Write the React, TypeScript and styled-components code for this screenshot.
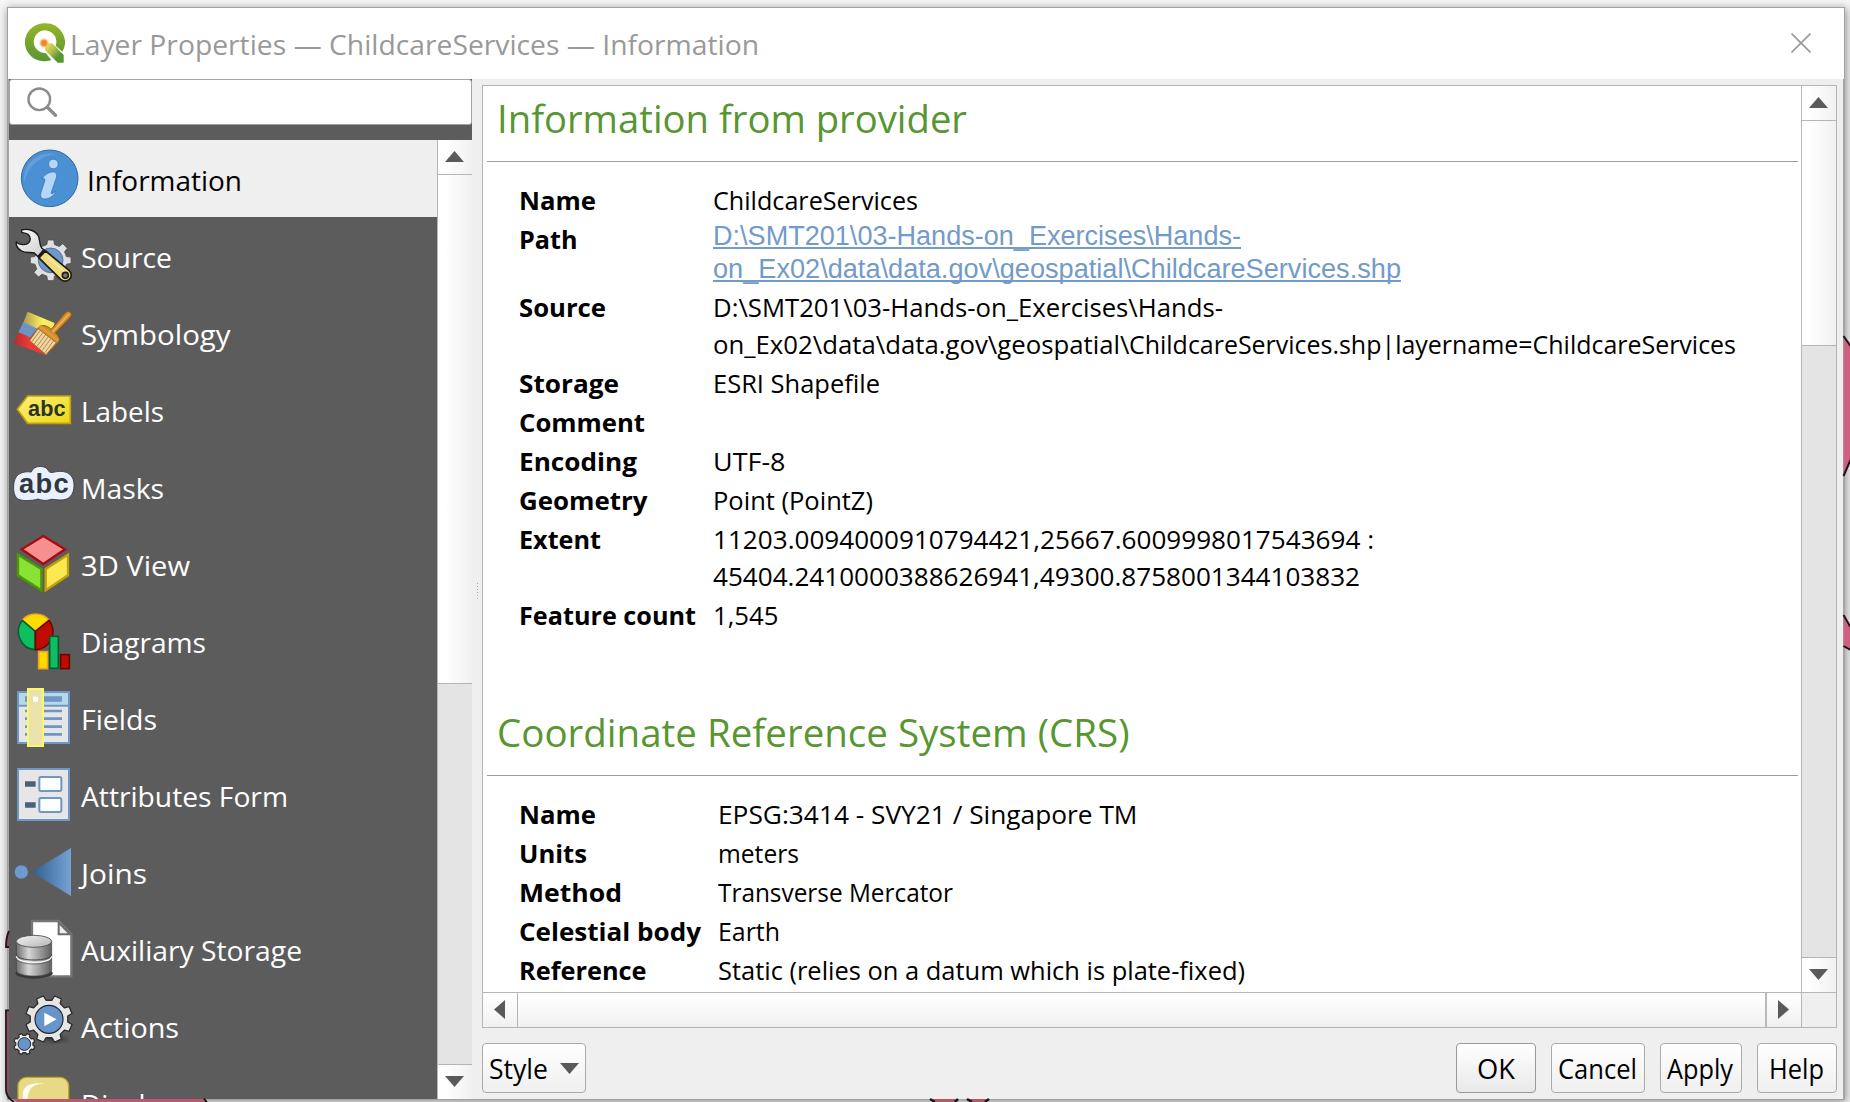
import React, { useLayoutEffect, useRef, useState } from "react";
import styled, { createGlobalStyle, css } from "styled-components";

const UI_FONT = `"Open Sans", "Noto Sans", sans-serif`;
const LINK_FONT = `"Liberation Sans", Arial, sans-serif`;

const GlobalStyle = createGlobalStyle`
  * { box-sizing: border-box; }
  html, body { margin: 0; padding: 0; }
  body { width: 1850px; height: 1102px; overflow: hidden; background: #f7f7f7; font-family: ${UI_FONT}; }
`;

/* ---------- text set to a fixed measure ---------- */

const Measure = styled.span<{ $w: number }>`
  display: block;
  flex: none;
  width: ${(p) => p.$w}px;
  white-space: nowrap;
`;

const Glyphs = styled.span`
  display: inline-block;
  vertical-align: top;
  transform-origin: 0 0;
`;

function FitText({ w, children }: { w: number; children: React.ReactNode }) {
  const ref = useRef<HTMLSpanElement>(null);
  const [scale, setScale] = useState(1);
  useLayoutEffect(() => {
    if (ref.current && ref.current.offsetWidth) {
      setScale(w / ref.current.getBoundingClientRect().width);
    }
  }, []);
  return (
    <Measure $w={w}>
      <Glyphs ref={ref} style={{ transform: `scaleX(${scale})` }}>
        {children}
      </Glyphs>
    </Measure>
  );
}

/* ---------- window frame ---------- */

const Desktop = styled.div`
  position: relative;
  width: 1850px;
  height: 1102px;
  padding: 7px 5px 2px 7px;
  overflow: hidden;
  background: #f7f7f7;
`;

const Dialog = styled.div`
  display: flex;
  flex-direction: column;
  width: 1838px;
  height: 1093px;
  border: 1px solid #a2a2a2;
  background: #efefef;
  box-shadow: 1px 2px 9px 1px rgba(0, 0, 0, 0.38);
`;

const TitleBar = styled.header`
  display: flex;
  align-items: center;
  flex: none;
  height: 71px;
  padding: 0 33px 2px 15px;
  background: #fff;
`;

const Title = styled.h1`
  display: flex;
  margin: 0 auto 0 5px;
  padding-top: 2px;
  font-size: 28px;
  font-weight: 400;
  line-height: 40px;
  color: #999;
`;

const Body = styled.div`
  display: flex;
  flex: 1;
  min-height: 0;
  border-left: 1px solid #a6a6a6;
  border-right: 1px solid #a6a6a6;
`;

/* ---------- sidebar ---------- */

const Sidebar = styled.aside`
  display: flex;
  flex-direction: column;
  flex: none;
  width: 463px;
  background: #5c5c5c;
`;

const SearchBox = styled.div`
  display: flex;
  align-items: center;
  flex: none;
  height: 46px;
  margin-bottom: 15px;
  padding-left: 16px;
  border: 1px solid #a3a3a3;
  border-radius: 3px;
  background: #fff;
`;

const ListArea = styled.div`
  display: flex;
  flex: 1;
  min-height: 0;
`;

const List = styled.nav`
  flex: 1;
  overflow: hidden;
  background: #5c5c5c;
`;

const Item = styled.div<{ $active?: boolean }>`
  display: flex;
  height: 77px;
  color: #fff;
  font-size: 28px;
  line-height: 80px;
  ${(p) =>
    p.$active &&
    css`
      background: #efefef;
      color: #000;
    `}
`;

const IconSlot = styled.svg<{ $wide?: boolean }>`
  flex: none;
  width: 70px;
  height: 77px;
  margin-right: ${(p) => (p.$wide ? 8 : 2)}px;
`;

/* ---------- scroll bars ---------- */

const VBar = styled.div`
  display: flex;
  flex-direction: column;
  flex: none;
  width: 35px;
  border-left: 1px solid #b4b6b6;
  background: #e4e4e4;
`;

const VButton = styled.div<{ $end?: boolean }>`
  display: flex;
  align-items: center;
  justify-content: center;
  flex: none;
  height: 35px;
  padding: 0 2px 1px 0;
  border-${(p) => (p.$end ? "top" : "bottom")}: 1px solid #b4b6b6;
  background: linear-gradient(90deg, #fff 20%, #f1f1f1);
`;

const VThumb = styled.div<{ $h: number }>`
  flex: none;
  height: ${(p) => p.$h}px;
  margin-bottom: auto;
  border-bottom: 1px solid #b4b6b6;
  background: linear-gradient(90deg, #fff 20%, #f1f1f1);
`;

const HRow = styled.div`
  display: flex;
  flex: none;
  height: 35px;
  border-top: 1px solid #b4b6b6;
  background: #efefef;
`;

const HPart = styled.div<{ $w?: number; $line?: "left" | "right" }>`
  display: flex;
  align-items: center;
  justify-content: center;
  flex: ${(p) => (p.$w ? "none" : 1)};
  width: ${(p) => (p.$w ? `${p.$w}px` : "auto")};
  padding: 0 2px 1px 0;
  background: linear-gradient(180deg, #fff 10%, #f0f0f0);
  border-left: ${(p) => (p.$line === "left" ? "2px solid #b9bbbb" : "0")};
  border-right: ${(p) => (p.$line === "right" ? "1px solid #b4b6b6" : "0")};
`;

const Corner = styled.div`
  flex: none;
  width: 35px;
  border-left: 1px solid #b4b6b6;
`;

/* ---------- information pane ---------- */

const Splitter = styled.div`
  display: flex;
  align-items: center;
  justify-content: center;
  flex: none;
  width: 10px;
  padding-top: 6px;
`;

const Main = styled.main`
  display: flex;
  flex-direction: column;
  flex: 1;
  min-width: 0;
  padding: 6px 6px 6px 0;
`;

const Frame = styled.section`
  display: flex;
  flex-direction: column;
  flex: none;
  height: 943px;
  border: 1px solid #b4b6b6;
  background: #fff;
`;

const FrameTop = styled.div`
  display: flex;
  flex: 1;
  min-height: 0;
`;

const Page = styled.div`
  flex: 1;
  min-width: 0;
  overflow: hidden;
  padding: 0 3px 0 4px;
  background: #fff;
`;

const Heading = styled.h2`
  margin: 0;
  padding: 5px 0 17px 10px;
  border-bottom: 1px solid #9c9c9c;
  font-size: 39px;
  font-weight: 400;
  line-height: 53px;
  color: #589632;
`;

const Table = styled.dl`
  margin: 19px 0 65px;
  padding-left: 32px;
`;

const Row = styled.div<{ $h?: number }>`
  display: flex;
  height: ${(p) => p.$h ?? 39}px;
`;

const Label = styled.dt<{ $col: number }>`
  flex: none;
  width: ${(p) => p.$col}px;
  font-size: 25.5px;
  font-weight: 700;
  line-height: 39px;
  color: #000;
`;

const Value = styled.dd`
  margin: 0;
  padding-top: 1px;
  font-size: 25.5px;
  line-height: 37px;
  color: #000;
`;

const LinkValue = styled.dd`
  margin: 0;
  font-family: ${LINK_FONT};
  font-size: 27px;
  line-height: 33px;
  color: #729bc9;

  ${Glyphs} {
    text-decoration: underline;
    text-decoration-thickness: 2px;
    text-underline-offset: 2px;
    text-decoration-skip-ink: none;
  }
`;

const TextLine = styled.div`
  display: flex;
`;

/* ---------- footer ---------- */

const Footer = styled.footer`
  display: flex;
  gap: 15px;
  margin-top: 15px;
`;

const Button = styled.button<{ $w: number; $strong?: boolean; $left?: boolean }>`
  display: flex;
  align-items: center;
  justify-content: ${(p) => (p.$left ? "space-between" : "center")};
  width: ${(p) => p.$w}px;
  height: 50px;
  padding: ${(p) => (p.$left ? "2px 6px 0 6px" : "2px 2px 0 0")};
  margin-right: ${(p) => (p.$left ? "auto" : "0")};
  border: 1px solid ${(p) => (p.$strong ? "#999" : "#ababab")};
  border-radius: 4px;
  background: linear-gradient(180deg, #fff, ${(p) => (p.$strong ? "#e9e9e9" : "#efefef")});
  font-family: ${UI_FONT};
  font-size: 26.5px;
  line-height: 48px;
  color: #000;

  svg {
    margin-bottom: 2px;
  }
`;

const Backdrop = styled.svg`
  position: absolute;
  inset: 0;
  pointer-events: none;
`;

/* ---------- small drawings ---------- */

const Arrow = ({ dir }: { dir: "up" | "down" | "left" | "right" }) => {
  const shapes = {
    up: "0,11 9.5,0 19,11",
    down: "0,0 19,0 9.5,11",
    left: "11,0 11,19 0,9.5",
    right: "0,0 11,9.5 0,19",
  };
  const flat = dir === "up" || dir === "down";
  return (
    <svg width={flat ? 19 : 11} height={flat ? 11 : 19}>
      <polygon points={shapes[dir]} fill="#5a5a5a" />
    </svg>
  );
};

const Logo = () => (
  <svg width="42" height="42" viewBox="72 66 126 126">
    <defs>
      <linearGradient id="qg" x1="0" y1="0" x2="0" y2="1">
        <stop offset="0" stopColor="#94b527" />
        <stop offset="1" stopColor="#589632" />
      </linearGradient>
      <linearGradient id="qt" x1="0" y1="0" x2="1" y2="1">
        <stop offset="0" stopColor="#f6e64c" />
        <stop offset=".4" stopColor="#a9c04a" />
        <stop offset=".7" stopColor="#589632" />
      </linearGradient>
      <radialGradient id="qo">
        <stop offset="0" stopColor="#ee7913" />
        <stop offset=".5" stopColor="#f0953f" />
        <stop offset="1" stopColor="#fbe0b8" stopOpacity="0" />
      </radialGradient>
    </defs>
    <path
      d="M135 70a58 57 0 1 0 22 110l-17-21a34 34 0 1 1 30-22l20 18a58 57 0 0 0-55-85z"
      fill="url(#qg)"
    />
    <path d="M138 130h22l34 35v23h-18l-38-38z" fill="url(#qt)" />
    <circle cx="135" cy="129" r="17" fill="url(#qo)" />
  </svg>
);

const CloseIcon = () => (
  <svg width="20" height="20" viewBox="0 0 20 20">
    <path d="M.5.5l19 19M19.5.5l-19 19" stroke="#999" strokeWidth="1.6" fill="none" />
  </svg>
);

const SearchIcon = () => (
  <svg width="32" height="32" viewBox="0 0 32 32">
    <circle cx="13.3" cy="13.3" r="10.8" fill="none" stroke="#8c8c8c" strokeWidth="2.4" />
    <path d="M21.3 21.3l8.2 8" stroke="#8c8c8c" strokeWidth="3.4" strokeLinecap="round" />
  </svg>
);

function gearPath(cx: number, cy: number, ro: number, ri: number, teeth: number, turn = 0) {
  const step = (Math.PI * 2) / teeth;
  const pts: string[] = [];
  for (let i = 0; i < teeth; i++) {
    const a = i * step + turn;
    const corners: [number, number][] = [
      [ri, -0.3],
      [ro, -0.2],
      [ro, 0.2],
      [ri, 0.3],
    ];
    corners.forEach(([r, k]) =>
      pts.push(`${(cx + r * Math.cos(a + k * step)).toFixed(1)} ${(cy + r * Math.sin(a + k * step)).toFixed(1)}`)
    );
  }
  return `M${pts.join("L")}Z`;
}

const InformationIcon = () => (
  <IconSlot $wide viewBox="27 420 210 231">
    <circle cx="149" cy="535" r="85" fill="#4a90d3" stroke="#2f69a8" strokeWidth="3" />
    <path d="M72 548c-4-60 44-96 96-86-50 6-84 38-96 86z" fill="#6ba6de" opacity=".75" />
    <g fill="#b4d7f8" stroke="#2f6cab" strokeWidth="2">
      <circle cx="160" cy="492" r="14.5" />
      <path d="M126 536c8-12 22-22 36-20 9 2 9 11 6 20l-14 41c-2 7 4 5 14-4-4 12-18 23-33 24-13 0-15-9-12-20l11-34c2-7-1-9-8-7z" />
    </g>
  </IconSlot>
);

const SourceIcon = () => (
  <IconSlot viewBox="27 651 210 231">
    <defs>
      <linearGradient id="wr" x1="0" y1="0" x2="1" y2="1">
        <stop offset="0" stopColor="#fff" />
        <stop offset="1" stopColor="#c9c9c9" />
      </linearGradient>
    </defs>
    <path d={gearPath(152, 781, 62, 49, 8)} fill="#dedfe0" stroke="#555" strokeWidth="3" strokeLinejoin="round" />
    <circle cx="152" cy="781" r="37" fill="#6d98cb" stroke="#48648a" strokeWidth="2.5" />
    <path
      d="M65 690c18-5 42 1 50 18 6 12 2 27 10 36l15 12-22 18-15-15c-12-4-26 2-38-6-12-7-18-16-16-27 10 10 26 10 35 4 9-7 9-19 0-27-6-5-14-4-19-6z"
      fill="url(#wr)"
      stroke="#1b1b1b"
      strokeWidth="4"
      strokeLinejoin="round"
    />
    <path
      d="M137 753l70 58c9 8 9 20 1 27-8 7-18 7-26 0l-66-65z"
      fill="#f0dc7d"
      stroke="#1b1b1b"
      strokeWidth="5"
      strokeLinejoin="round"
    />
    <path d="M134 750l-19 22" stroke="#1b1b1b" strokeWidth="10" />
    <path d="M142 770l50 44" stroke="#f8eca6" strokeWidth="4" />
    <circle cx="196" cy="826" r="9" fill="#777" stroke="#1b1b1b" strokeWidth="5" />
  </IconSlot>
);

const SymbologyIcon = () => (
  <IconSlot viewBox="27 12 210 231">
    <defs>
      <linearGradient id="fy" x1="0" x2="1">
        <stop offset="0" stopColor="#a89a4e" />
        <stop offset=".6" stopColor="#fbec63" />
      </linearGradient>
      <linearGradient id="fr" x1="0" x2="1">
        <stop offset="0" stopColor="#b52b2b" />
        <stop offset=".5" stopColor="#ef3a36" />
      </linearGradient>
    </defs>
    <path d="M83 65l81 34-12 40-83-39z" fill="url(#fy)" />
    <path d="M70 97l80 36-12 32-84-36z" fill="#6c93c4" />
    <path d="M55 126l84 38-2 31-96-35z" fill="url(#fr)" />
    <path
      d="M118 110c12-8 28 0 36 8l38-45c6-9 14-11 20-6 5 5 3 11-4 18l-42 44c10 7 14 16 10 26l-38 41-50-48z"
      fill="#d08a2a"
      stroke="#8d5a17"
      strokeWidth="3"
      strokeLinejoin="round"
    />
    <path d="M159 124l47-51" stroke="#f0b35c" strokeWidth="5" strokeLinecap="round" />
    <path d="M114 116l55 42-31 36-49-42z" fill="#f1d6a0" stroke="#8d5a17" strokeWidth="2" />
    <path
      d="M120 122l-25 34M128 129l-26 34M136 135l-26 35M144 141l-26 35M152 147l-26 35M160 153l-26 36"
      stroke="#a27a45"
      strokeWidth="2.5"
    />
    <path d="M118 108l57 44" stroke="#dd9a36" strokeWidth="9" />
  </IconSlot>
);

const LabelsIcon = () => (
  <IconSlot viewBox="27 243 210 231">
    <defs>
      <linearGradient id="lb" x1="0" y1="0" x2="1" y2="1">
        <stop offset="0" stopColor="#fbf17a" />
        <stop offset="1" stopColor="#eed716" />
      </linearGradient>
    </defs>
    <path d="M52 358l31-40h128v82H83z" fill="url(#lb)" stroke="#c2a00c" strokeWidth="5" />
    <text x="84" y="378" fontFamily={LINK_FONT} fontWeight="700" fontSize="65" textLength="113" fill="#2c3424">
      abc
    </text>
  </IconSlot>
);

const MasksIcon = () => (
  <IconSlot viewBox="27 474 210 231">
    <path
      d="M94 546c6-22 46-22 52-2 8 8 18 0 34 0 30 0 42 18 42 42 0 28-14 45-42 44-14 0-22-4-30-1-14 5-26 1-36-2-20 6-46 6-58 1-12-6-16-22-15-40 1-32 20-46 53-42z"
      fill="#eaf0fc"
      stroke="#30373d"
      strokeWidth="2.5"
    />
    <text x="57" y="608" fontFamily={LINK_FONT} fontWeight="700" fontSize="82" textLength="149" fill="#2f3840">
      abc
    </text>
  </IconSlot>
);

const View3DIcon = () => (
  <IconSlot viewBox="27 -75 210 231">
    <path d="M130-42l65 40-65 44-65-44z" fill="#f78f8f" stroke="#a90a0f" strokeWidth="7" />
    <path d="M54 14l70 43v64L54 76z" fill="#8ae234" stroke="#4b9a06" strokeWidth="7" />
    <path d="M204 14l-67 43v64l67-45z" fill="#fce94f" stroke="#c4a008" strokeWidth="7" />
  </IconSlot>
);

const DiagramsIcon = () => (
  <IconSlot viewBox="27 156 210 231">
    <path d="M106 244L67 210a52 50 0 0 1 80 0z" fill="#ffdc00" stroke="#f0a31c" strokeWidth="5" />
    <path d="M106 244v55a53 54 0 0 1-39-88z" fill="#0dbf5e" stroke="#0b5c30" strokeWidth="5" />
    <path d="M106 244v55a53 54 0 0 0 41-88z" fill="#c00c00" stroke="#660800" strokeWidth="5" />
    <rect x="116" y="305" width="27" height="51" fill="#ffdc00" stroke="#f0a31c" strokeWidth="5" />
    <rect x="149" y="259" width="26" height="96" fill="#0dbf5e" stroke="#0b5c30" strokeWidth="5" />
    <rect x="182" y="314" width="26" height="42" fill="#c00c00" stroke="#660800" strokeWidth="5" />
  </IconSlot>
);

const FieldsIcon = () => (
  <IconSlot viewBox="27 387 210 231">
    <rect x="54" y="426" width="153" height="153" fill="#e6e6e6" stroke="#7096c4" strokeWidth="6" />
    <rect x="57" y="429" width="147" height="37" fill="#b5d8ec" />
    <path d="M54 467h153" stroke="#7096c4" strokeWidth="6" />
    <path d="M75 447h111" stroke="#7096c4" strokeWidth="17" />
    <path d="M75 483h111M75 506h111M75 530h111M75 553h111" stroke="#7096c4" strokeWidth="8" />
    <rect x="84" y="417" width="45" height="171" fill="#e9e2ab" stroke="#fdf868" strokeWidth="6" />
    <rect x="99" y="440" width="15" height="15" fill="#fff" />
  </IconSlot>
);

const FormIcon = () => (
  <IconSlot viewBox="27 618 210 231">
    <rect x="54" y="657" width="153" height="153" fill="#e6e6e6" stroke="#7096c4" strokeWidth="6" />
    <path d="M75 702h32M75 765h32" stroke="#4c6078" strokeWidth="16" />
    <rect x="118" y="681" width="66" height="42" rx="5" fill="#fcffff" stroke="#7096c4" strokeWidth="6" />
    <rect x="118" y="744" width="66" height="42" rx="5" fill="#fcffff" stroke="#7096c4" strokeWidth="6" />
  </IconSlot>
);

const JoinsIcon = () => (
  <IconSlot viewBox="27 39 210 231">
    <defs>
      <linearGradient id="jn" x1="0" x2="1">
        <stop offset="0" stopColor="#2f5c90" />
        <stop offset="1" stopColor="#76a3d4" />
      </linearGradient>
    </defs>
    <circle cx="64" cy="156" r="20" fill="#6c9bd0" />
    <path d="M95 156l118-72v144z" fill="url(#jn)" />
  </IconSlot>
);

const StorageIcon = () => (
  <IconSlot viewBox="27 270 210 231">
    <defs>
      <linearGradient id="cy" x1="0" x2="1">
        <stop offset="0" stopColor="#6e6e6e" />
        <stop offset=".35" stopColor="#d6d6d6" />
        <stop offset="1" stopColor="#5f5f5f" />
      </linearGradient>
      <linearGradient id="ct" x1="0" x2="1" y2="1">
        <stop offset="0" stopColor="#f4f4f4" />
        <stop offset="1" stopColor="#b4b4b4" />
      </linearGradient>
    </defs>
    <path d="M96 303h80l38 40v126H96z" fill="#fff" stroke="#767676" strokeWidth="7" />
    <path d="M176 308v35h34z" fill="#efefef" stroke="#6b6b6b" strokeWidth="6" />
    <ellipse cx="102" cy="460" rx="56" ry="16" fill="#373b3b" />
    <path d="M49 364v86c0 24 106 24 106 0v-86z" fill="url(#cy)" stroke="#444" strokeWidth="2" />
    <path d="M49 402c0 24 106 24 106 0" fill="none" stroke="#444" strokeWidth="3" />
    <path d="M49 409c0 24 106 24 106 0" fill="none" stroke="#f5f5f5" strokeWidth="4" />
    <path d="M49 414c0 24 106 24 106 0" fill="none" stroke="#555" strokeWidth="2" />
    <ellipse cx="102" cy="364" rx="53" ry="18" fill="url(#ct)" stroke="#4a4a4a" strokeWidth="2.5" />
  </IconSlot>
);

const ActionsIcon = () => (
  <IconSlot viewBox="27 501 210 231">
    <defs>
      <radialGradient id="as">
        <stop offset="0" stopColor="#222" stopOpacity=".6" />
        <stop offset="1" stopColor="#222" stopOpacity="0" />
      </radialGradient>
    </defs>
    <ellipse cx="165" cy="657" rx="50" ry="18" fill="url(#as)" />
    <path
      d={gearPath(147, 597, 71, 57, 8, Math.PI / 8)}
      fill="#e6e6e6"
      stroke="#2b2b2b"
      strokeWidth="4"
      strokeLinejoin="round"
    />
    <circle cx="147" cy="598" r="42" fill="#6694cb" stroke="#20262e" strokeWidth="3.5" />
    <path d="M133 578l37 20-37 21z" fill="#fff" />
    <path
      d={gearPath(73, 672, 32, 26, 8, Math.PI / 8)}
      fill="#f0f0f0"
      stroke="#2b2b2b"
      strokeWidth="3.5"
      strokeLinejoin="round"
    />
    <circle cx="73" cy="672" r="19" fill="#6694cb" stroke="#20262e" strokeWidth="3" />
  </IconSlot>
);

const DisplayIcon = () => (
  <IconSlot viewBox="27 732 210 231">
    <rect x="54" y="772" width="152" height="130" rx="26" fill="#e6da84" stroke="#bfa526" strokeWidth="4" />
    <path d="M69 840c-6-38 10-54 66-50-34 4-48 8-53 50z" fill="#fffef2" />
  </IconSlot>
);

/* ---------- content ---------- */

const items: { name: string; w: number; icon: React.FC }[] = [
  { name: "Information", w: 155, icon: InformationIcon },
  { name: "Source", w: 91, icon: SourceIcon },
  { name: "Symbology", w: 149.5, icon: SymbologyIcon },
  { name: "Labels", w: 83, icon: LabelsIcon },
  { name: "Masks", w: 83, icon: MasksIcon },
  { name: "3D View", w: 109, icon: View3DIcon },
  { name: "Diagrams", w: 125, icon: DiagramsIcon },
  { name: "Fields", w: 76, icon: FieldsIcon },
  { name: "Attributes Form", w: 207, icon: FormIcon },
  { name: "Joins", w: 66, icon: JoinsIcon },
  { name: "Auxiliary Storage", w: 221, icon: StorageIcon },
  { name: "Actions", w: 98, icon: ActionsIcon },
  { name: "Display", w: 94, icon: DisplayIcon },
];

type Part = { text: string; w: number };
type Entry = { label: string; lw: number; h?: number; link?: boolean; lines: Part[][] };

const provider: Entry[] = [
  { label: "Name", lw: 77, lines: [[{ text: "ChildcareServices", w: 205 }]] },
  {
    label: "Path",
    lw: 58.5,
    h: 68,
    link: true,
    lines: [
      [{ text: "D:\\SMT201\\03-Hands-on_Exercises\\Hands-", w: 528 }],
      [{ text: "on_Ex02\\data\\data.gov\\geospatial\\ChildcareServices.shp", w: 688 }],
    ],
  },
  {
    label: "Source",
    lw: 87,
    h: 76,
    lines: [
      [{ text: "D:\\SMT201\\03-Hands-on_Exercises\\Hands-", w: 510 }],
      [
        { text: "on_Ex02\\data\\data.gov\\geospatial\\", w: 416.5 },
        { text: "ChildcareServices.shp|layername=ChildcareServices", w: 607 },
      ],
    ],
  },
  { label: "Storage", lw: 100, lines: [[{ text: "ESRI Shapefile", w: 167 }]] },
  { label: "Comment", lw: 126, lines: [] },
  { label: "Encoding", lw: 118, lines: [[{ text: "UTF-8", w: 72.500 }]] },
  { label: "Geometry", lw: 128.5, lines: [[{ text: "Point (PointZ)", w: 160 }]] },
  {
    label: "Extent",
    lw: 82,
    h: 76,
    lines: [
      [{ text: "11203.0094000910794421,25667.6009998017543694 :", w: 661 }],
      [{ text: "45404.2410000388626941,49300.8758001344103832", w: 647 }],
    ],
  },
  { label: "Feature count", lw: 177, lines: [[{ text: "1,545", w: 65.5 }]] },
];

const crs: Entry[] = [
  { label: "Name", lw: 77, lines: [[{ text: "EPSG:3414 - SVY21 / Singapore TM", w: 419.5 }]] },
  { label: "Units", lw: 68, lines: [[{ text: "meters", w: 81 }]] },
  { label: "Method", lw: 103, lines: [[{ text: "Transverse Mercator", w: 235 }]] },
  { label: "Celestial body", lw: 182, lines: [[{ text: "Earth", w: 62 }]] },
  { label: "Reference", lw: 127.5, lines: [[{ text: "Static (relies on a datum which is plate-fixed)", w: 527 }]] },
];

function Section({ title, w, col, entries }: { title: string; w: number; col: number; entries: Entry[] }) {
  return (
    <>
      <Heading>
        <FitText w={w}>{title}</FitText>
      </Heading>
      <Table>
        {entries.map((e) => {
          const Cell = e.link ? LinkValue : Value;
          return (
            <Row key={e.label} $h={e.h}>
              <Label $col={col}>
                <FitText w={e.lw}>{e.label}</FitText>
              </Label>
              <Cell>
                {e.lines.map((line, i) => (
                  <TextLine key={i}>
                    {line.map((part) => (
                      <FitText key={part.text} w={part.w}>
                        {part.text}
                      </FitText>
                    ))}
                  </TextLine>
                ))}
              </Cell>
            </Row>
          );
        })}
      </Table>
    </>
  );
}

export default function App() {
  return (
    <Desktop>
      <GlobalStyle />
      <Dialog>
        <TitleBar>
          <Logo />
          <Title>
            <FitText w={689}>Layer Properties — ChildcareServices — Information</FitText>
          </Title>
          <CloseIcon />
        </TitleBar>
        <Body>
          <Sidebar>
            <SearchBox>
              <SearchIcon />
            </SearchBox>
            <ListArea>
              <List>
                {items.map((it, i) => (
                  <Item key={it.name} $active={i === 0}>
                    <it.icon />
                    <FitText w={it.w}>{it.name}</FitText>
                  </Item>
                ))}
              </List>
              <VBar>
                <VButton>
                  <Arrow dir="up" />
                </VButton>
                <VThumb $h={509} />
                <VButton $end>
                  <Arrow dir="down" />
                </VButton>
              </VBar>
            </ListArea>
          </Sidebar>
          <Splitter>
            <svg width="3" height="18">
              <path d="M1.5 0v18" stroke="#a8a8a8" strokeWidth="1" strokeDasharray="1 2" />
            </svg>
          </Splitter>
          <Main>
            <Frame>
              <FrameTop>
                <Page>
                  <Section title="Information from provider" w={470} col={193.5} entries={provider} />
                  <Section title="Coordinate Reference System (CRS)" w={632.5} col={198.5} entries={crs} />
                </Page>
                <VBar>
                  <VButton>
                    <Arrow dir="up" />
                  </VButton>
                  <VThumb $h={225} />
                  <VButton $end>
                    <Arrow dir="down" />
                  </VButton>
                </VBar>
              </FrameTop>
              <HRow>
                <HPart $w={35} $line="right">
                  <Arrow dir="left" />
                </HPart>
                <HPart />
                <HPart $w={36} $line="left">
                  <Arrow dir="right" />
                </HPart>
                <Corner />
              </HRow>
            </Frame>
            <Footer>
              <Button $w={104} $left>
                <FitText w={59}>Style</FitText>
                <Arrow dir="down" />
              </Button>
              <Button $w={80} $strong>
                <FitText w={38}>OK</FitText>
              </Button>
              <Button $w={94}>
                <FitText w={79}>Cancel</FitText>
              </Button>
              <Button $w={82}>
                <FitText w={66}>Apply</FitText>
              </Button>
              <Button $w={80}>
                <FitText w={55}>Help</FitText>
              </Button>
            </Footer>
          </Main>
        </Body>
      </Dialog>
      <Backdrop width="1850" height="1102" viewBox="0 0 1850 1102">
        <g fill="#cf6180">
          <path d="M1843.5 336l6.5 10v115l-6.5 14z" />
          <path d="M1843.5 616l6.5 11v23l-6.5-3z" />
        </g>
        <path
          d="M1843.5 336l7 10M1850.5 460l-7 16M1843.5 615l7 12M1843.5 646l7 4"
          stroke="#1c1618"
          strokeWidth="2"
          fill="none"
        />
        <path d="M7 1012h2v85l3 2H9l-2-4zM7 934l2-3v16H7z" fill="#8d4d5c" />
        <path d="M9 931c-3 6-3 11-3 16h3M9 1010.5H6V1090c0 5 3 9 8 12" stroke="#1c1618" strokeWidth="1.8" fill="none" />
        <path d="M13 1099h191l3 3H16z" fill="#b95a72" />
        <path d="M204 1098.5l3 4" stroke="#1c1618" strokeWidth="2" />
        <path d="M931 1099h27l-3 3h-19zM968 1099h21l-4 3h-12z" fill="#b0596d" />
        <path d="M930 1099l5 3M958 1099l-3 3M967 1099l5 3M989 1099l-4 3" stroke="#1c1618" strokeWidth="2.5" />
      </Backdrop>
    </Desktop>
  );
}
